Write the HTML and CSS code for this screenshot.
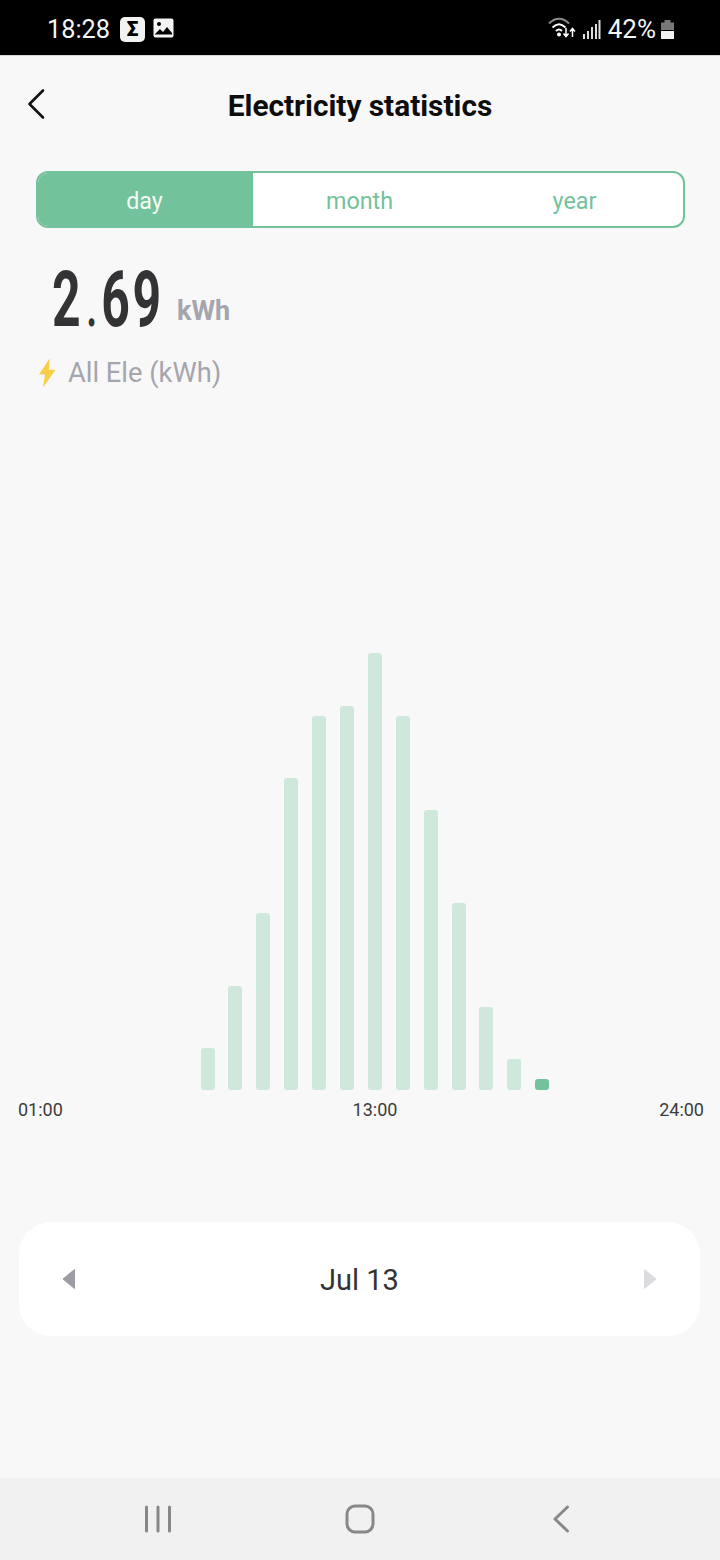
FILE: index.html
```html
<!DOCTYPE html>
<html lang="en">
<head>
<meta charset="utf-8">
<title>Electricity statistics</title>
<link rel="stylesheet" href="styles.css">
</head>
<body>
<div class="phone">
  <div class="status">
    <div class="status-left">
      <span class="clock">18:28</span>
      <span class="sigma">Σ</span>
      <svg class="pic" width="21" height="20" viewBox="0 0 21 20"><rect x="0.5" y="0.5" width="20" height="19" rx="2" fill="#f4f4f4"/><circle cx="6" cy="6" r="2" fill="#000"/><path d="M2 16l5-5 3 3 4-5 5 6v1.500H2z" fill="#000"/></svg>
    </div>
    <div class="status-right">
      <svg width="30" height="26" viewBox="0 0 30 26" fill="none"><path d="M1 7.500C7 1 15 1 21 7.500" stroke="#8c8c8c" stroke-width="2"/><path d="M4.500 11.500C9 7 13 7 17.500 11.500" stroke="#fff" stroke-width="2"/><path d="M8 15c2-2 4-2 6 0" stroke="#fff" stroke-width="2"/><circle cx="11" cy="18.500" r="2" fill="#fff"/><path d="M18 12v8M15.500 17.500l2.500 3 2.500-3M24.500 21v-8M22 15.500l2.500-3 2.500 3" stroke="#fff" stroke-width="1.500"/></svg>
      <svg width="19" height="21" viewBox="0 0 19 21" class="signal"><path d="M1 15h2v5H1zM5 12h2v8H5zM9 8h2v12H9zM13 5h2v15h-2zM16.500 1h2v19h-2z" fill="#ddd"/></svg>
      <span class="pct">42%</span>
      <svg width="15" height="21" viewBox="0 0 15 21"><path d="M4.500 1h6v2.500h3.500V11H1V3.500h3.500z" fill="#777"/><rect x="1" y="12" width="13" height="8" fill="#f2f2f2"/></svg>
    </div>
  </div>

  <main class="content">
    <header class="topbar">
      <svg class="back" width="20" height="32" viewBox="0 0 20 32" fill="none"><path d="M17 2.500L3.500 16 17 29.500" stroke="#111" stroke-width="2.600" stroke-linecap="round" stroke-linejoin="round"/></svg>
      <h1 class="title">Electricity statistics</h1>
    </header>

    <div class="tabs">
      <div class="tab tab-active">day</div>
      <div class="tab">month</div>
      <div class="tab">year</div>
    </div>

    <div class="total">
      <span class="total-num">2<span class="total-dot">.</span>69</span>
      <span class="total-unit">kWh</span>
    </div>

    <div class="legend">
      <svg width="18" height="30" viewBox="0 0 18 28" preserveAspectRatio="none"><path d="M11.500 0.500L1 15.500h6L5 27.500 17.500 11h-6.500z" fill="#f8ce46"/></svg>
      <span>All Ele (kWh)</span>
    </div>

    <div class="chart">
      <div class="bars">
        <div class="bar" style="height:42px"></div>
        <div class="bar" style="height:104px"></div>
        <div class="bar" style="height:177px"></div>
        <div class="bar" style="height:312px"></div>
        <div class="bar" style="height:374px"></div>
        <div class="bar" style="height:384px"></div>
        <div class="bar" style="height:437px"></div>
        <div class="bar" style="height:374px"></div>
        <div class="bar" style="height:280px"></div>
        <div class="bar" style="height:187px"></div>
        <div class="bar" style="height:83px"></div>
        <div class="bar" style="height:31px"></div>
        <div class="bar bar-now" style="height:11px"></div>
      </div>
      <div class="axis">
        <span>01:00</span>
        <span class="axis-mid">13:00</span>
        <span>24:00</span>
      </div>
    </div>

    <div class="date-card">
      <svg width="13" height="20" viewBox="0 0 13 20"><path d="M12.500 0.500v19L1 10z" fill="#9c9ca4" stroke="#9c9ca4" stroke-linejoin="round"/></svg>
      <span class="date">Jul 13</span>
      <svg width="13" height="20" viewBox="0 0 13 20"><path d="M0.500 0.500v19L12 10z" fill="#dcdce0" stroke="#dcdce0" stroke-linejoin="round"/></svg>
    </div>
  </main>

  <nav class="navbar">
    <svg width="28" height="28" viewBox="0 0 28 28" fill="none"><path d="M2.500 2v24M14 2v24M25.500 2v24" stroke="#888" stroke-width="3" stroke-linecap="round"/></svg>
    <svg class="nav-home" width="30" height="30" viewBox="0 0 30 30" fill="none"><rect x="2" y="2" width="26" height="26" rx="8" stroke="#888" stroke-width="3"/></svg>
    <svg width="18" height="28" viewBox="0 0 18 28" fill="none"><path d="M15.500 2L3 14l12.500 12" stroke="#888" stroke-width="3" stroke-linecap="round" stroke-linejoin="round"/></svg>
  </nav>
</div>
</body>
</html>
```

FILE: styles.css
```css
* { box-sizing: border-box; }
html, body { margin: 0; padding: 0; }
body { font-family: Roboto, "Noto Sans", sans-serif; background: #f8f8f8; }
.phone { width: 720px; height: 1560px; display: flex; flex-direction: column; overflow: hidden; }

.status { height: 56px; background: #000; border-bottom: 1px solid #d8d8d8; display: flex; justify-content: space-between; align-items: center; padding: 3px 45px 0 47px; color: #f5f5f5; flex: none; }
.status-left, .status-right { display: flex; align-items: center; }
.clock { font-size: 25.300px; width: 73px; }
.sigma { width: 25px; height: 25px; border-radius: 5px; background: #f2f2f2; color: #000; font-weight: 900; font-size: 21px; line-height: 25px; text-align: center; margin-right: 8px; }
.pic { margin-top: -3px; }
.signal { margin-left: 4px; }
.pct { font-size: 26px; margin: 0 4px 0 7px; }

.content { flex: 1; display: flex; flex-direction: column; }
.topbar { height: 99px; position: relative; display: flex; align-items: center; justify-content: center; }
.back { position: absolute; left: 26px; top: 32px; }
.title { margin: 0; font-size: 29.800px; font-weight: 700; color: #0d0d0d; line-height: 34px; }

.tabs { margin: 16px 35px 0 36px; height: 57px; border: 2px solid #72c29b; border-radius: 12px; display: flex; background: #fff; overflow: hidden; }
.tab { flex: 1; display: flex; align-items: center; justify-content: center; font-size: 23.300px; color: #72c29b; padding: 2px 2px 0 0; }
.tab-active { background: #72c29b; color: #f4fbf7; flex: none; width: 215px; }

.total { margin: 37px 0 0 52px; height: 72px; display: flex; align-items: flex-end; }
.total-num { font-size: 78px; font-weight: 700; line-height: 72px; color: #333336; width: 111px; display: inline-block; transform: translateY(6px) scaleX(.64); transform-origin: left center; letter-spacing: 4px; white-space: nowrap; }
.total-dot { font-size: 56px; letter-spacing: 7px; margin-left: 5px; }
.total-unit { font-size: 27px; font-weight: 700; color: #a5a5ae; margin: 0 0 10px 14px; line-height: 32px; }

.legend { margin: 19px 0 0 38px; height: 34px; display: flex; align-items: center; gap: 12px; font-size: 27.300px; color: #a5a5ae; }

.chart { flex: none; }
.bars { height: 700px; display: flex; align-items: flex-end; gap: 13.900px; padding-left: 200.500px; }
.bar { width: 14px; background: #cee8dc; border-radius: 3px; flex: none; }
.bar-now { background: #72c29b; }
.axis { display: flex; justify-content: space-between; padding: 10px 16px 0 18px; font-size: 18px; line-height: 20px; color: #3c3c3c; }
.axis-mid { margin-left: 28px; }

.date-card { margin: 102px 20px 0 19px; height: 114px; background: #fff; border-radius: 32px; display: flex; align-items: center; justify-content: space-between; padding: 0 43px; }
.date { font-size: 29px; color: #333; padding-top: 2px; }

.navbar { height: 82px; background: #f1f1f1; display: flex; align-items: center; flex: none; padding: 0 150px 0 144px; justify-content: space-between; }
.nav-home { margin-right: 5px; }
```
